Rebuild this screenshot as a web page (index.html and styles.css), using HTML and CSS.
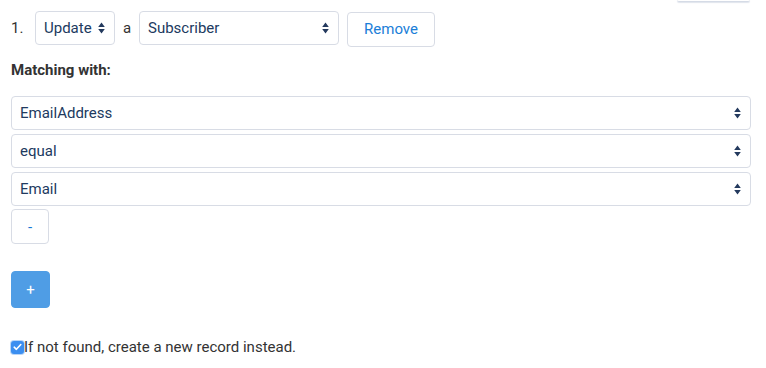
FILE: index.html
```html
<!DOCTYPE html>
<html>
<head>
<meta charset="utf-8">
<link rel="stylesheet" href="styles.css">
</head>
<body>
<div class="topbar"><div class="topstub"></div></div>
<div class="page">
  <div class="rule-row">
    <span class="num">1.</span>
    <div class="sel sel-update"><span>Update</span><svg class="arr" width="7" height="12" viewBox="0 0 7 12"><path d="M3.5 0.5L6.8 5H0.2Z M3.5 11.5L6.8 7H0.2Z" fill="#243a5e"/></svg></div>
    <span class="art">a</span>
    <div class="sel sel-sub"><span>Subscriber</span><svg class="arr" width="7" height="12" viewBox="0 0 7 12"><path d="M3.5 0.5L6.8 5H0.2Z M3.5 11.5L6.8 7H0.2Z" fill="#243a5e"/></svg></div>
    <button class="btn btn-remove">Remove</button>
  </div>
  <div class="label">Matching with:</div>
  <div class="stack">
    <div class="sel sel-full"><span>EmailAddress</span><svg class="arr" width="7" height="12" viewBox="0 0 7 12"><path d="M3.5 0.5L6.8 5H0.2Z M3.5 11.5L6.8 7H0.2Z" fill="#243a5e"/></svg></div>
    <div class="sel sel-full"><span>equal</span><svg class="arr" width="7" height="12" viewBox="0 0 7 12"><path d="M3.5 0.5L6.8 5H0.2Z M3.5 11.5L6.8 7H0.2Z" fill="#243a5e"/></svg></div>
    <div class="sel sel-full"><span>Email</span><svg class="arr" width="7" height="12" viewBox="0 0 7 12"><path d="M3.5 0.5L6.8 5H0.2Z M3.5 11.5L6.8 7H0.2Z" fill="#243a5e"/></svg></div>
  </div>
  <button class="btn btn-minus">-</button>
  <button class="btn btn-plus">+</button>
  <label class="check">
    <span class="box"><svg width="9" height="8" viewBox="0 0 9 8"><path d="M1.2 4.2L3.4 6.3L7.8 1.5" fill="none" stroke="#fff" stroke-width="1.6" stroke-linecap="round" stroke-linejoin="round"/></svg></span>
    <span>If not found, create a new record instead.</span>
  </label>
</div>
</body>
</html>
```

FILE: styles.css
```css
* { box-sizing: border-box; }
html, body { margin: 0; padding: 0; background: #fff; }
body {
  font-family: Roboto, "Liberation Sans", sans-serif;
  font-size: 15px;
  line-height: 18px;
  color: #333;
  width: 766px;
  height: 368px;
  overflow: hidden;
}
.topbar {
  display: flex;
  justify-content: flex-end;
  padding-right: 16px;
  height: 2px;
}
.topstub {
  width: 73px;
  height: 2px;
  border-bottom: 1px solid #d5dbe6;
  border-radius: 0 0 4px 4px;
  box-shadow: 0 1px 1px rgba(180,190,210,0.4);
}
.page {
  padding: 9px 15px 0 11px;
}
.rule-row {
  display: flex;
  align-items: center;
  height: 35px;
}
.num {
  color: #333;
  width: 24px;
  margin-top: -2px;
}
.art {
  color: #333;
  width: 24px;
  text-align: center;
  margin-top: -2px;
}
.sel {
  display: flex;
  align-items: center;
  justify-content: space-between;
  height: 34px;
  border: 1px solid #d8dce5;
  border-radius: 4px;
  padding: 0 8px 0 8px;
  color: #213a60;
  background: #fff;
}
.sel span { margin-top: -1px; }
.sel-update { width: 80px; margin-top: -1px; }
.sel-sub { width: 200px; margin-top: -1px; }
.sel-full { width: 740px; }
.arr { display: block; flex: none; margin-right: 1px; }
.btn {
  font-family: Roboto, "Liberation Sans", sans-serif;
  font-size: 15px;
  border: 1px solid #d8dce5;
  border-radius: 4px;
  background: #fff;
  color: #1a7ed8;
  cursor: pointer;
  padding: 0;
}
.btn-remove {
  width: 88px;
  height: 35px;
  margin-left: 8px;
  margin-top: 1px;
}
.label {
  font-weight: bold;
  color: #333;
  margin-top: 15px;
  height: 18px;
}
.stack {
  display: flex;
  flex-direction: column;
  gap: 4px;
  margin-top: 17px;
}
.btn-minus {
  display: block;
  width: 38px;
  height: 35px;
  margin-top: 3px;
  font-size: 15px;
  color: #1677d6;
}
.btn-plus {
  display: block;
  width: 39px;
  height: 37px;
  margin-top: 27px;
  background: #4f9de5;
  border-color: #4f9de5;
  color: #fff;
  font-size: 15px;
}
.check {
  display: flex;
  align-items: center;
  margin-top: 30px;
  color: #333;
}
.box {
  width: 13px;
  height: 13px;
  border-radius: 3px;
  background: #3b8ef0;
  display: flex;
  align-items: center;
  justify-content: center;
  box-shadow: 0 0 0 1px #b9d5f7;
}
```
